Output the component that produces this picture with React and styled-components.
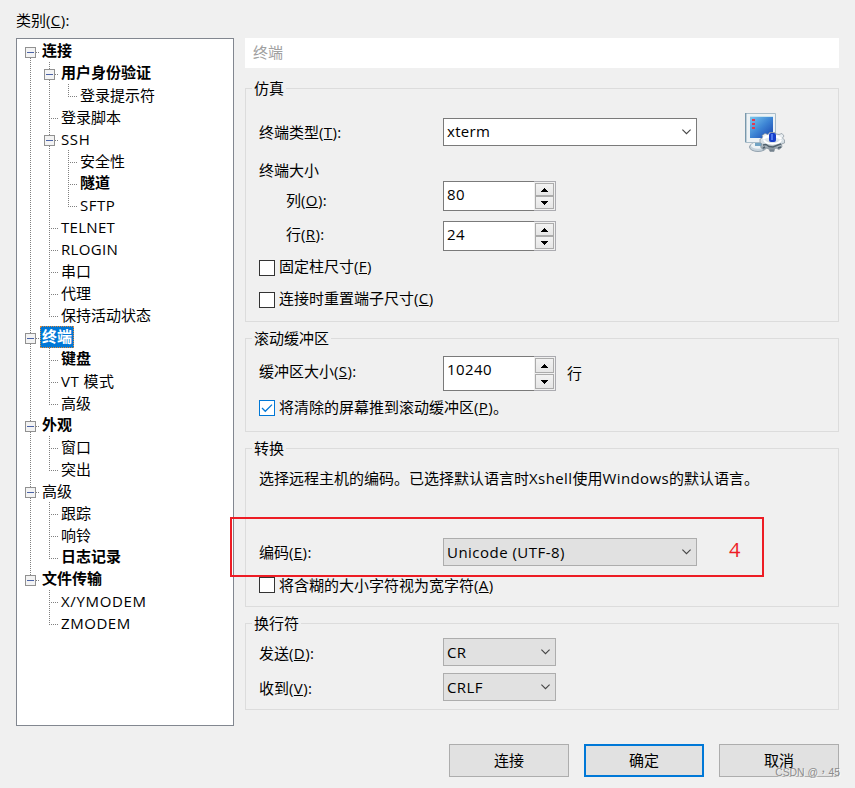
import React from "react";
import styled, { createGlobalStyle } from "styled-components";

const GlobalStyle = createGlobalStyle`
  * {
    box-sizing: border-box;
  }

  body {
    margin: 0;
    background: #f0f0f0;
    color: #000;
    font-family: "Open Sans", "Noto Sans CJK SC", sans-serif;
    font-size: 15px;
    line-height: 22px;
  }
`;

const Dialog = styled.div`
  position: relative;
  display: flex;
  flex-direction: column;
  width: 855px;
  height: 788px;
  padding: 0 16px;
  overflow: hidden;
  white-space: nowrap;
`;

const Columns = styled.div`
  display: flex;
  gap: 11px;
`;

const Sidebar = styled.div`
  width: 218px;
`;

const SidebarLabel = styled.div`
  height: 38px;
  padding-top: 9px;
`;

const TreeBox = styled.div`
  height: 688px;
  padding: 1px 0 0 4px;
  background: #fff;
  border: 1px solid #828790;
`;

const TreeRow = styled.div`
  display: flex;
  height: 22px;
`;

const Guide = styled.svg`
  flex: none;
  width: 19px;
  height: 22px;
`;

const TreeLabel = styled.span`
  height: 22px;
  padding: 0 2px;
  line-height: ${props => (props.$bold ? 20 : 22)}px;
  font-weight: ${props => (props.$bold ? 700 : 400)};
  color: ${props => (props.$selected ? "#fff" : "#000")};
  background: ${props => (props.$selected ? "#0078d7" : "none")};
  outline: ${props => (props.$selected ? "1px dotted #e08a3c" : "none")};
  outline-offset: -1px;
`;

const Latin = styled.span`
  letter-spacing: ${props => props.$spacing || 0.4}px;
`;

const Main = styled.div`
  width: 594px;
  padding-top: 38px;
`;

const PageTitle = styled.div`
  height: 30px;
  margin-bottom: 10px;
  padding: 3px 8px;
  background: #fff;
  color: #a0a0a0;
`;

const Groups = styled.div`
  display: flex;
  flex-direction: column;
  gap: 6px;
`;

const Group = styled.fieldset`
  height: ${props => props.$height}px;
  min-width: 0;
  margin: 0;
  padding: 0 0 0 13px;
  border: 1px solid #dcdcdc;
`;

const Legend = styled.legend`
  height: 21px;
  margin-left: -7px;
  padding: 0 2px;
  line-height: 21px;
`;

const Row = styled.div`
  display: flex;
  align-items: center;
  height: ${props => props.$height || 28}px;
  margin-top: ${props => props.$top || 0}px;
`;

const FieldLabel = styled.label`
  width: 184px;
  margin-top: ${props => (props.$lower || 0) * 2}px;
  margin-bottom: ${props => (props.$raise || 0) * 2}px;
  padding-left: ${props => (props.$indent ? 27 : 0)}px;
`;

const Text = styled.div`
  height: 22px;
  margin-top: ${props => props.$top || 0}px;
`;

const Suffix = styled.span`
  margin: 0 0 2px 11px;
`;

const Select = styled.div`
  display: flex;
  align-items: center;
  justify-content: space-between;
  width: ${props => props.$width}px;
  height: 28px;
  padding: 0 5px 0 3px;
  background: ${props => (props.$editable ? "#fff" : "#e1e1e1")};
  border: 1px solid ${props => (props.$editable ? "#7a7a7a" : "#adadad")};
`;

const SelectText = styled.span`
  margin-bottom: ${props => (props.$editable ? 2 : 0)}px;
`;

const SpinBox = styled.div`
  display: flex;
  width: 113px;
  height: 100%;
`;

const SpinValue = styled.div`
  flex: 1;
  padding: 1px 0 0 3px;
  background: #fff;
  border: 1px solid #7a7a7a;
  border-right: 0;
`;

const SpinButtons = styled.div`
  display: flex;
  flex-direction: column;
  justify-content: space-between;
  width: 22px;
  padding: 1px;
  border: 1px solid #ababb0;
  border-left: 0;
`;

const SpinButton = styled.div`
  display: flex;
  align-items: center;
  justify-content: center;
  height: ${props => props.$height}px;
  background: linear-gradient(#f2f2f2, #e6e6e6);
  border: 1px solid #ababab;
`;

const CheckRow = styled.label`
  display: flex;
  align-items: center;
  gap: 4px;
  height: 22px;
  margin-top: ${props => props.$top}px;
`;

const Box = styled.span`
  display: flex;
  width: 16px;
  height: 16px;
  background: #fff;
  border: 1px solid ${props => (props.$checked ? "#0078d7" : "#333")};
`;

const CheckText = styled.span`
  margin-bottom: ${props => (props.$raise || 0) * 2}px;
`;

const ProductIcon = styled.svg`
  width: 40px;
  height: 40px;
  margin-left: 48px;
`;

const Footer = styled.div`
  display: flex;
  justify-content: flex-end;
  gap: 15px;
  margin-top: 18px;
`;

const Button = styled.button`
  width: 120px;
  height: 33px;
  padding: 0 0 2px;
  font: inherit;
  color: #000;
  background: #e1e1e1;
  border: ${props => (props.$primary ? "2px solid #0078d7" : "1px solid #adadad")};
`;

const Highlight = styled.div`
  position: absolute;
  left: 230px;
  top: 517px;
  width: 534px;
  height: 60px;
  border: 2px solid #ed1c24;
`;

const Step = styled.span`
  position: absolute;
  left: 497px;
  top: 17px;
  font-size: 20px;
  line-height: 28px;
  color: #ed1c24;
`;

const Watermark = styled.div`
  position: absolute;
  right: 15px;
  bottom: 6px;
  font-family: "Liberation Sans", "Noto Sans CJK TC", sans-serif;
  font-size: 10.4px;
  line-height: 18px;
  color: #8c8c8c;
  text-shadow: 1px 1px 0 rgba(255, 255, 255, 0.7);
`;

const tree = [
  { level: 0, text: "连接", bold: true },
  { level: 1, text: "用户身份验证", bold: true },
  { level: 2, text: "登录提示符" },
  { level: 1, text: "登录脚本" },
  { level: 1, text: "SSH", spacing: 0.6 },
  { level: 2, text: "安全性" },
  { level: 2, text: "隧道", bold: true },
  { level: 2, text: "SFTP", spacing: 0.5 },
  { level: 1, text: "TELNET", spacing: 0.3 },
  { level: 1, text: "RLOGIN", spacing: 0.35 },
  { level: 1, text: "串口" },
  { level: 1, text: "代理" },
  { level: 1, text: "保持活动状态" },
  { level: 0, text: "终端", bold: true, selected: true },
  { level: 1, text: "键盘", bold: true },
  { level: 1, text: "VT 模式", spacing: 0.45 },
  { level: 1, text: "高级" },
  { level: 0, text: "外观", bold: true },
  { level: 1, text: "窗口" },
  { level: 1, text: "突出" },
  { level: 0, text: "高级" },
  { level: 1, text: "跟踪" },
  { level: 1, text: "响铃" },
  { level: 1, text: "日志记录", bold: true },
  { level: 0, text: "文件传输", bold: true },
  { level: 1, text: "X/YMODEM", spacing: 0.65 },
  { level: 1, text: "ZMODEM", spacing: 0.55 }
];

// does the line of this level go on below the row?
const continues = (index, level) => {
  const next = tree.slice(index + 1).find(item => item.level <= level);
  return Boolean(next) && next.level === level;
};

const TreeGuide = ({ index, level }) => {
  const own = tree[index].level === level;
  const parent = own && tree[index + 1] && tree[index + 1].level > level;
  const down = continues(index, level);
  const up = own ? index > 0 : down;
  return (
    <Guide viewBox="0 0 19 22" shapeRendering="crispEdges">
      <g stroke="#808080" strokeDasharray="1 1">
        {up && <path d="M9.5 0V12" />}
        {down && <path d="M9.5 12V22" />}
        {own && <path d="M9 12.5H18" />}
      </g>
      {parent && (
        <g>
          <rect x="4.5" y="7.5" width="10" height="10" fill="#f3f3f3" stroke="#919191" />
          <path d="M6 12.5H13" stroke="#4b63a7" />
        </g>
      )}
    </Guide>
  );
};

const Tree = () => (
  <TreeBox>
    {tree.map((item, index) => (
      <TreeRow key={index}>
        {Array.from({ length: item.level + 1 }, (_, level) => (
          <TreeGuide key={level} index={index} level={level} />
        ))}
        <TreeLabel $bold={item.bold} $selected={item.selected}>
          {item.spacing ? <Latin $spacing={item.spacing}>{item.text}</Latin> : item.text}
        </TreeLabel>
      </TreeRow>
    ))}
  </TreeBox>
);

// keyboard accelerator after a label
const Key = ({ children }) => (
  <Latin>
    (<u>{children}</u>)
  </Latin>
);

const Chevron = () => (
  <svg width="9" height="6" viewBox="0 0 9 6" fill="none" stroke="#444" strokeWidth="1.1">
    <path d="M0.4 0.6L4.5 4.7L8.6 0.6" />
  </svg>
);

const Arrow = ({ down }) => (
  <svg width="7" height="4" viewBox="0 0 7 4" shapeRendering="crispEdges">
    <path d={down ? "M0 0H7V1H6V2H5V3H4V4H3V3H2V2H1V1H0Z" : "M3 0H4V1H5V2H6V3H7V4H0V3H1V2H2V1H3Z"} />
  </svg>
);

const Combo = ({ width, editable, spacing, children }) => (
  <Select $width={width} $editable={editable}>
    <SelectText $editable={editable}>
      <Latin $spacing={spacing}>{children}</Latin>
    </SelectText>
    <Chevron />
  </Select>
);

const Spinner = ({ value, buttonHeight = 13 }) => (
  <SpinBox>
    <SpinValue>
      <Latin>{value}</Latin>
    </SpinValue>
    <SpinButtons>
      <SpinButton $height={buttonHeight}>
        <Arrow />
      </SpinButton>
      <SpinButton $height={buttonHeight}>
        <Arrow down />
      </SpinButton>
    </SpinButtons>
  </SpinBox>
);

const Check = ({ top, raise, checked, children }) => (
  <CheckRow $top={top}>
    <Box $checked={checked}>
      {checked && (
        <svg width="14" height="14" viewBox="0 0 14 14" fill="none" stroke="#0078d7" strokeWidth="1.3">
          <path d="M2 7L5.3 10.3L12 3.6" />
        </svg>
      )}
    </Box>
    <CheckText $raise={raise}>{children}</CheckText>
  </CheckRow>
);

const TerminalIcon = () => (
  <ProductIcon viewBox="0 0 40 40">
    <defs>
      <linearGradient id="screen" x1="0" y1="0" x2="1" y2="1">
        <stop offset="0" stopColor="#7cc8ee" />
        <stop offset="0.5" stopColor="#3d84d4" />
        <stop offset="1" stopColor="#1742ae" />
      </linearGradient>
      <linearGradient id="metal" x1="0" y1="0" x2="0" y2="1">
        <stop offset="0" stopColor="#f4f7f9" />
        <stop offset="0.55" stopColor="#d3dce2" />
        <stop offset="1" stopColor="#687682" />
      </linearGradient>
    </defs>
    <ellipse cx="13" cy="35" rx="8.5" ry="4.5" fill="#c6d3dc" stroke="#93a2ae" />
    <ellipse cx="13" cy="33.5" rx="7" ry="3.2" fill="#eef3f5" />
    <path d="M10 29H17V34H10Z" fill="#72a4c4" />
    <path d="M0.5 1.5H30.5V27L27 30.5H0.5Z" fill="#edf2f5" stroke="#a9bcc8" />
    <path d="M0.7 1V30" stroke="#7898ac" strokeWidth="1.4" />
    <path d="M5 5H28V26H5Z" fill="url(#screen)" />
    <path d="M5 4.5H28" stroke="#c7e4ef" />
    <path d="M8.5 7V17" stroke="#e13a50" strokeWidth="3" strokeDasharray="2 2" />
    <path
      d="M24.5 20.5H30L31 22L34 22.5L37 21.5L39 24L37.5 26L39.5 28V31L36.5 32L37 35L34 37.5L31 36L29.5 37L29 39.5H25L24 37L21 36L18 37.5L15.5 35L17 32L15 30.5V27L18 26L17 23.5L20 21.5L23 22.5Z"
      fill="url(#metal)"
      stroke="#84919b"
      strokeWidth="0.7"
    />
    <path d="M18 33L21 32.5L24 34.5L28 35L33 33L36 32M18 36L20 35M33 36L36 35" fill="none" stroke="#4f5f6b" strokeWidth="1.4" />
    <path d="M18 27C21 23 33 23 36 27" fill="none" stroke="#fff" strokeWidth="2.4" />
    <path d="M19 28C21 33 34 33 36 28" fill="none" stroke="#fff" strokeWidth="2" />
    <rect x="24" y="21" width="7" height="9" rx="2" fill="#173ec8" />
    <rect x="26" y="22" width="2" height="6" fill="#4d79f2" />
  </ProductIcon>
);

const App = () => (
  <>
    <GlobalStyle />
    <Dialog>
      <Columns>
        <Sidebar>
          <SidebarLabel>
            类别<Key>C</Key>:
          </SidebarLabel>
          <Tree />
        </Sidebar>
        <Main>
          <PageTitle>终端</PageTitle>
          <Groups>
            <Group $height={244}>
              <Legend>仿真</Legend>
              <Row $top={19}>
                <FieldLabel>
                  终端类型<Key>T</Key>:
                </FieldLabel>
                <Combo width={254} editable spacing={0.3}>
                  xterm
                </Combo>
                <TerminalIcon />
              </Row>
              <Row $top={13} $height={22}>
                <FieldLabel $raise={0.5}>终端大小</FieldLabel>
              </Row>
              <Row $height={30}>
                <FieldLabel $indent $lower={4}>
                  列<Key>O</Key>:
                </FieldLabel>
                <Spinner value="80" />
              </Row>
              <Row $top={10} $height={30}>
                <FieldLabel $indent $raise={2.5}>
                  行<Key>R</Key>:
                </FieldLabel>
                <Spinner value="24" />
              </Row>
              <Check top={6} raise={2}>
                固定柱尺寸<Key>F</Key>
              </Check>
              <Check top={10} raise={2}>
                连接时重置端子尺寸<Key>C</Key>
              </Check>
            </Group>
            <Group $height={104}>
              <Legend>滚动缓冲区</Legend>
              <Row $top={7} $height={35}>
                <FieldLabel $raise={2.5}>
                  缓冲区大小<Key>S</Key>:
                </FieldLabel>
                <Spinner value="10240" buttonHeight={15} />
                <Suffix>行</Suffix>
              </Row>
              <Check top={6} raise={1} checked>
                将清除的屏幕推到滚动缓冲区<Key>P</Key>。
              </Check>
            </Group>
            <Group $height={169}>
              <Legend>转换</Legend>
              <Text $top={8}>
                选择远程主机的编码。已选择默认语言时<Latin>Xshell</Latin>使用<Latin>Windows</Latin>
                的默认语言。
              </Text>
              <Row $top={49}>
                <FieldLabel $raise={0.5}>
                  编码<Key>E</Key>:
                </FieldLabel>
                <Combo width={254} spacing={0.48}>
                  Unicode (UTF-8)
                </Combo>
              </Row>
              <Check top={8}>
                将含糊的大小字符视为宽字符<Key>A</Key>
              </Check>
            </Group>
            <Group $height={97}>
              <Legend>换行符</Legend>
              <Row $top={4}>
                <FieldLabel $lower={1}>
                  发送<Key>D</Key>:
                </FieldLabel>
                <Combo width={113}>CR</Combo>
              </Row>
              <Row $top={7}>
                <FieldLabel $lower={1}>
                  收到<Key>V</Key>:
                </FieldLabel>
                <Combo width={113}>CRLF</Combo>
              </Row>
            </Group>
          </Groups>
        </Main>
      </Columns>
      <Footer>
        <Button>连接</Button>
        <Button $primary>确定</Button>
        <Button>取消</Button>
      </Footer>
      <Highlight>
        <Step>4</Step>
      </Highlight>
      <Watermark>CSDN @，45</Watermark>
    </Dialog>
  </>
);

export default App;
